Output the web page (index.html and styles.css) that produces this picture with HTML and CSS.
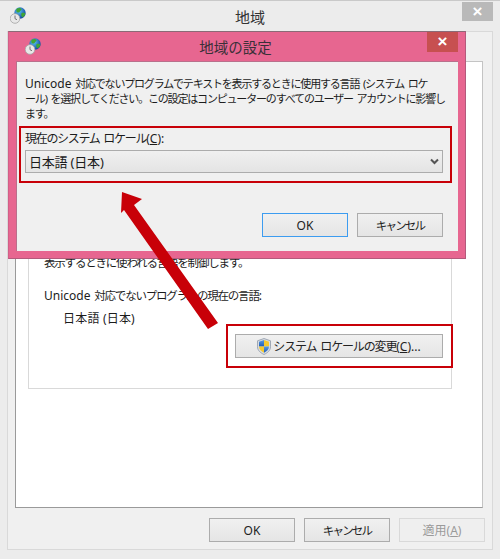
FILE: index.html
```html
<!DOCTYPE html>
<html lang="ja">
<head>
  <meta charset="UTF-8" />
  <title>地域</title>
  <link rel="stylesheet" href="styles.css">
</head>
<body>
  <svg class="defs" width="0" height="0">
    <defs>
      <radialGradient id="globeFill" cx="40%" cy="35%" r="70%">
        <stop offset="0" stop-color="#5cc4f2"/>
        <stop offset="1" stop-color="#0c3f9c"/>
      </radialGradient>
      <linearGradient id="shieldBlue" x1="0" y1="0" x2="0" y2="1">
        <stop offset="0" stop-color="#5a9be0"/>
        <stop offset="1" stop-color="#1e5cb8"/>
      </linearGradient>
      <symbol id="regionIcon" viewBox="0 0 16 17">
        <circle cx="10" cy="6" r="5.700" fill="url(#globeFill)"/>
        <path d="M7 1.500c1.800-1 3.800-.6 4.400.5.500 1-1 1.400-1.500 2.500-.4 1-1.800 1.300-2.900.7C6 4.900 6 2.300 7 1.500z" fill="#3fa534"/>
        <path d="M11.500 6.300c1-.6 3-.6 3.800.2-.2 1.700-1.300 3.300-2.900 3.800-1-.9-1.600-3-.9-4z" fill="#3fa534"/>
        <circle cx="5" cy="11.500" r="4.800" fill="#e8e8e8" stroke="#a3a3a3" stroke-width=".8"/>
        <path d="M5 8.500v3.200l2 1" fill="none" stroke="#666" stroke-width=".9"/>
      </symbol>
    </defs>
  </svg>

  <div class="window">
    <div class="titlebar">
      <svg class="app-icon"><use href="#regionIcon"/></svg>
      <span class="title">地域</span>
      <span class="close close-back">×</span>
    </div>
    <div class="frame">
      <div class="tabpage">
        <div class="group">
          <p class="line tight">表示するときに使われる言語を制御します。</p>
          <p class="line tight current-label"><span class="latin">Unicode</span> 対応でないプログラムの現在の言語<span class="latin">:</span></p>
          <p class="line current-value">日本語 (日本)</p>
          <div class="change-row">
            <div class="btn change-btn">
              <svg class="shield" viewBox="0 0 14 17">
                <path d="M7 .5l6.500 2.300v6c0 3.600-2.800 6-6.500 7.700C3.300 14.800.5 12.400.5 8.800v-6z" fill="#d8dce2" stroke="#8f99a8" stroke-width=".8"/>
                <path d="M7 2L2 3.800V8.500h5z" fill="url(#shieldBlue)"/>
                <path d="M7 2l5 1.800V8.500H7z" fill="#f5c92e"/>
                <path d="M2 8.500h5v6.200C4.300 13.300 2 11.400 2 8.500z" fill="#f5c92e"/>
                <path d="M12 8.500H7v6.200c2.700-1.400 5-3.300 5-6.200z" fill="url(#shieldBlue)"/>
              </svg>
              <span class="narrow change-text">システム ロケールの変更<span class="latin">(<u>C</u>)...</span></span>
            </div>
          </div>
        </div>
      </div>
      <div class="footer">
        <div class="btn">OK</div>
        <div class="btn cancel">キャンセル</div>
        <div class="btn disabled">適用(<u>A</u>)</div>
      </div>
    </div>
  </div>

  <div class="dialog">
    <div class="dialog-title">
      <svg class="app-icon"><use href="#regionIcon"/></svg>
      <span class="title">地域の設定</span>
      <span class="close close-front">×</span>
    </div>
    <div class="dialog-body">
      <p class="desc"><span class="latin">Unicode</span> 対応でないプログラムでテキストを表示するときに使用する言語 (システム ロケ<br>ール) を選択してください。この設定はコンピューターのすべてのユーザー アカウントに影響し<br>ます。</p>
      <div class="locale-box">
        <div class="locale-label narrow">現在のシステム ロケール<span class="latin">(<u>C</u>):</span></div>
        <div class="select">
          <span>日本語 (日本)</span>
          <svg class="chevron" viewBox="0 0 9 7"><path d="M1 1.500l3.500 3.500L8 1.500" fill="none" stroke="#555" stroke-width="2"/></svg>
        </div>
      </div>
      <div class="dialog-buttons">
        <div class="btn default">OK</div>
        <div class="btn cancel">キャンセル</div>
      </div>
    </div>
  </div>

  <div class="highlight"></div>

  <svg class="arrow" viewBox="0 0 500 559">
    <path d="M122 192l20 7-8 6 84 118-10 6-84-119-3 3z" fill="#c80008"/>
  </svg>
</body>
</html>
```

FILE: styles.css
```css
* { box-sizing: border-box; }
html, body { margin: 0; padding: 0; }
body {
  position: relative;
  width: 500px;
  height: 559px;
  overflow: hidden;
  font-family: "Noto Sans", "Noto Sans CJK JP", sans-serif;
  font-size: 12px;
  color: #1c1c1c;
  background: #f0f0f0;
}
p { margin: 0; }
.defs { position: absolute; }
.narrow { letter-spacing: -.95px; word-spacing: 2px; }
.tight { font-size: 11.500px; letter-spacing: -1.200px; word-spacing: 2px; }
.latin { font-size: 12px; letter-spacing: 0; }
.cancel { font-size: 11.500px; letter-spacing: -1.800px; }

.window {
  display: flex;
  flex-direction: column;
  height: 559px;
  padding-right: 7px;
  padding-bottom: 9px;
  background: #ececec;
  border-top: 1px solid #c9c9c9;
}
.titlebar {
  position: relative;
  flex: 0 0 30px;
  margin-right: -7px;
  display: flex;
  align-items: center;
  justify-content: center;
}
.app-icon {
  position: absolute;
  left: 10px;
  top: 6px;
  width: 16px;
  height: 17px;
}
.title { font-size: 15px; color: #333; }
.close {
  position: absolute;
  top: 1px;
  height: 19px;
  width: 31px;
  display: flex;
  align-items: center;
  justify-content: center;
  color: #fff;
  font-size: 17px;
  font-weight: 700;
  font-family: "Liberation Sans", sans-serif;
}
.close-back { right: 7px; background: #b9b9b9; }

.frame {
  flex: 1;
  display: flex;
  flex-direction: column;
  margin-left: 7px;
  padding: 29px 9px 0 7px;
  background: #f0f0f0;
  border: 1px solid #d9d9d9;
}
.tabpage {
  height: 447px;
  padding: 0 30px 118px 12px;
  display: flex;
  flex-direction: column;
  justify-content: flex-end;
  background: #fff;
  border: 1px solid #9a9a9a;
  border-top-color: #c4c4c4;
  border-right-color: #c4c4c4;
}
.group {
  height: 200px;
  padding: 0 8px 0 15px;
  display: flex;
  flex-direction: column;
  justify-content: flex-end;
  border: 1px solid #d9d9d9;
  border-top: 0;
}
.line { line-height: 18px; }
.current-label { margin-top: 15px; }
.current-value { margin: 5px 0 0 19px; letter-spacing: .2px; }
.change-row {
  display: flex;
  justify-content: flex-end;
  margin-top: 6px;
  margin-bottom: 30px;
}
.btn {
  display: flex;
  align-items: center;
  justify-content: center;
  width: 86px;
  height: 24px;
  color: #222;
  background: linear-gradient(#f0f0f0, #e5e5e5);
  border: 1px solid #acacac;
}
.change-btn { width: 208px; gap: 2px; }
.change-text { letter-spacing: -1.150px; }
.shield { width: 14px; height: 17px; }
.footer {
  display: flex;
  justify-content: flex-end;
  gap: 9px;
  margin-right: -2px;
  padding-top: 10px;
}
.disabled {
  color: #9a9a9a;
  background: #efefef;
  border-color: #d9d9d9;
}

.dialog {
  position: absolute;
  left: 8px;
  top: 31px;
  width: 458px;
  height: 228px;
  display: flex;
  flex-direction: column;
  padding: 0 7px 7px 7px;
  background: #e76690;
  border: 1px solid #b35a7c;
  border-top-color: #8a6a76;
  border-left-color: #d26088;
}
.dialog .app-icon { left: 9px; top: 6px; }
.dialog-title {
  position: relative;
  flex: 0 0 29px;
  display: flex;
  align-items: center;
  justify-content: center;
}
.dialog-title .title { font-size: 14.500px; color: #3a3038; margin-top: -1px; margin-left: -3px; }
.close-front { top: 0; right: 0; width: 31px; height: 20px; background: #c75050; }
.dialog-body {
  flex: 1;
  padding: 14px 15px 0 8px;
  background: #f0f0f0;
  border: 1px solid #b9708c;
  border-width: 1px 0 0 1px;
}
.desc {
  line-height: 15px;
  font-size: 11px;
  letter-spacing: -1.180px;
  word-spacing: 2px;
  white-space: nowrap;
}
.locale-box {
  width: 433px;
  height: 57px;
  margin: 5px 0 0 -6px;
  padding: 3px 7px 0 4px;
  border: 2px solid #c80008;
}
.locale-label { line-height: 16px; letter-spacing: -1.300px; }
.select {
  display: flex;
  align-items: center;
  justify-content: space-between;
  height: 23px;
  margin-top: 3px;
  padding: 0 3px 0 3px;
  font-size: 13px;
  letter-spacing: -.2px;
  background: linear-gradient(#f0f0f0, #e4e4e4);
  border: 1px solid #acacac;
}
.chevron { width: 9px; height: 7px; }
.dialog-buttons {
  display: flex;
  justify-content: flex-end;
  gap: 9px;
  margin-top: 30px;
}
.default { border-color: #3c9cf0; }

.highlight {
  position: absolute;
  left: 226px;
  top: 324px;
  width: 227px;
  height: 44px;
  border: 2px solid #c80008;
}
.arrow {
  position: absolute;
  left: 0;
  top: 0;
  width: 500px;
  height: 559px;
  pointer-events: none;
}
```
